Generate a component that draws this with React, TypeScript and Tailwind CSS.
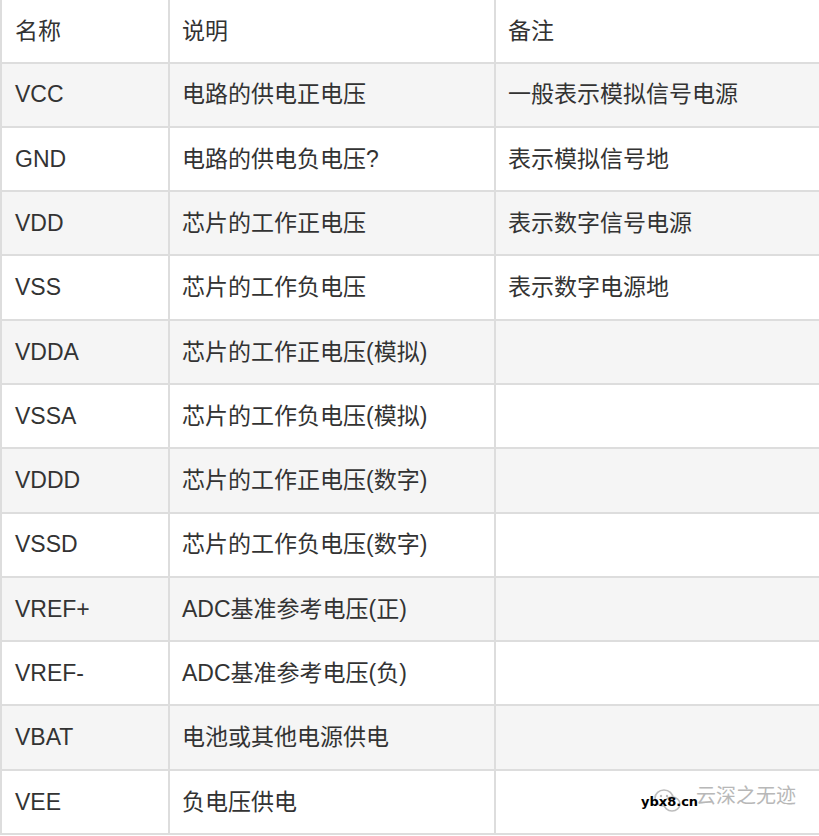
import React from "react";

const rows: [string, string, string][] = [
  ["VCC", "电路的供电正电压", "一般表示模拟信号电源"],
  ["GND", "电路的供电负电压?", "表示模拟信号地"],
  ["VDD", "芯片的工作正电压", "表示数字信号电源"],
  ["VSS", "芯片的工作负电压", "表示数字电源地"],
  ["VDDA", "芯片的工作正电压(模拟)", ""],
  ["VSSA", "芯片的工作负电压(模拟)", ""],
  ["VDDD", "芯片的工作正电压(数字)", ""],
  ["VSSD", "芯片的工作负电压(数字)", ""],
  ["VREF+", "ADC基准参考电压(正)", ""],
  ["VREF-", "ADC基准参考电压(负)", ""],
  ["VBAT", "电池或其他电源供电", ""],
  ["VEE", "负电压供电", ""],
];

const font = { fontFamily: '"Liberation Sans", "Noto Sans CJK SC", sans-serif' };

function Row({ cells, gray, last }: { cells: [string, string, string]; gray: boolean; last?: boolean }) {
  return (
    <div
      className={`grid grid-cols-[168px_326px_1fr] h-[64.3px] border-b-2 border-[#dddddd] ${gray ? "bg-[#f5f5f5]" : "bg-white"} ${last ? "relative" : ""}`}
    >
      <div className="flex items-center pl-[13px] border-r-2 border-[#dddddd]">{cells[0]}</div>
      <div className="flex items-center pl-[12px] border-r-2 border-[#dddddd]">{cells[1]}</div>
      <div className="flex items-center pl-[12px]">{cells[2]}</div>
      {last && (
        <div className="absolute left-[639px] top-[14px] flex items-center">
          <svg width="30" height="28" viewBox="0 0 30 28" className="absolute left-[12px] top-[2px]">
            <ellipse cx="11" cy="11" rx="9" ry="8" fill="none" stroke="#bdbdbd" strokeWidth="1.6" />
            <ellipse cx="19" cy="17" rx="8" ry="7" fill="white" stroke="#bdbdbd" strokeWidth="1.6" />
            <circle cx="8" cy="9" r="1.2" fill="#bdbdbd" />
            <circle cx="14" cy="9" r="1.2" fill="#bdbdbd" />
            <circle cx="16.5" cy="16" r="1" fill="#bdbdbd" />
            <circle cx="21.5" cy="16" r="1" fill="#bdbdbd" />
          </svg>
          <span className="absolute left-[0px] top-[10px] text-[13px] font-bold text-black leading-none whitespace-nowrap" style={{ fontFamily: '"DejaVu Sans", sans-serif' }}>
            ybx8.cn
          </span>
          <span className="absolute left-[55px] top-[1px] text-[20px] text-[#b8b8b8] leading-none whitespace-nowrap">
            云深之无迹
          </span>
        </div>
      )}
    </div>
  );
}

export default function App() {
  return (
    <div className="w-[819px] h-[836px] bg-white overflow-hidden text-[23px] text-[#333333]" style={font}>
      <div className="border-l-2 border-[#dddddd]">
        <div className="grid grid-cols-[168px_326px_1fr] h-[63.5px] border-b-2 border-[#dddddd] bg-white">
          <div className="flex items-center pl-[13px] border-r-2 border-[#dddddd]">名称</div>
          <div className="flex items-center pl-[12px] border-r-2 border-[#dddddd]">说明</div>
          <div className="flex items-center pl-[12px]">备注</div>
        </div>
        {rows.map((r, i) => (
          <Row key={r[0]} cells={r} gray={i % 2 === 0} last={i === rows.length - 1} />
        ))}
      </div>
    </div>
  );
}
